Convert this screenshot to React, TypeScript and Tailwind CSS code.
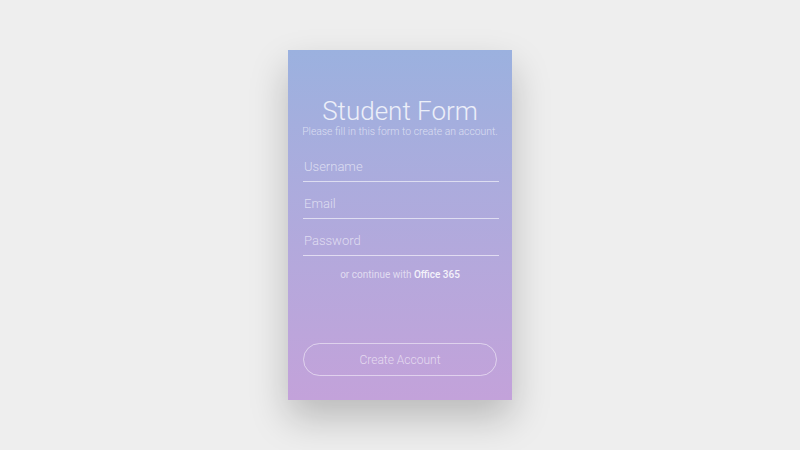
const fields = [
  { name: "username", type: "text", placeholder: "Username" },
  { name: "email", type: "email", placeholder: "Email" },
  { name: "password", type: "password", placeholder: "Password" },
];

const App = () => {
  return (
    <div className="flex h-[450px] w-full items-center justify-center bg-[#eeeeee] font-['Roboto',sans-serif]">
      <form
        className="flex h-[350px] w-[224px] flex-col bg-gradient-to-b from-[#9bb1df] to-[#c3a2da] px-[15px] pb-[24px] pt-[46px] shadow-[0_18px_36px_rgba(0,0,0,0.22)]"
        onSubmit={(e) => e.preventDefault()}
      >
        {/* Heading */}
        <h1 className="text-center text-[26px] font-light leading-[30px] text-white/80">
          Student Form
        </h1>
        <p className="-mx-[6px] whitespace-nowrap text-center text-[10.4px] font-light leading-[12px] text-white/60">
          Please fill in this form to create an account.
        </p>

        {/* Fields */}
        <div className="-mr-[2px] mt-[7px] flex flex-col">
          {fields.map((f) => (
            <input
              key={f.name}
              name={f.name}
              type={f.type}
              placeholder={f.placeholder}
              className="h-[37px] w-full border-b border-white/60 bg-transparent px-[1px] pt-[7px] text-[13px] font-light text-white outline-none placeholder:text-white/60"
            />
          ))}
        </div>

        <p className="mt-[13px] text-center text-[10px] leading-[12px] text-white/60">
          or continue with <span className="font-medium text-white/85">Office 365</span>
        </p>

        {/* Submit */}
        <button
          type="submit"
          className="mx-auto mt-auto h-[33px] w-[194px] rounded-full border border-white/50 text-[12px] font-light text-white/60"
        >
          Create Account
        </button>
      </form>
    </div>
  );
};

export default App;
